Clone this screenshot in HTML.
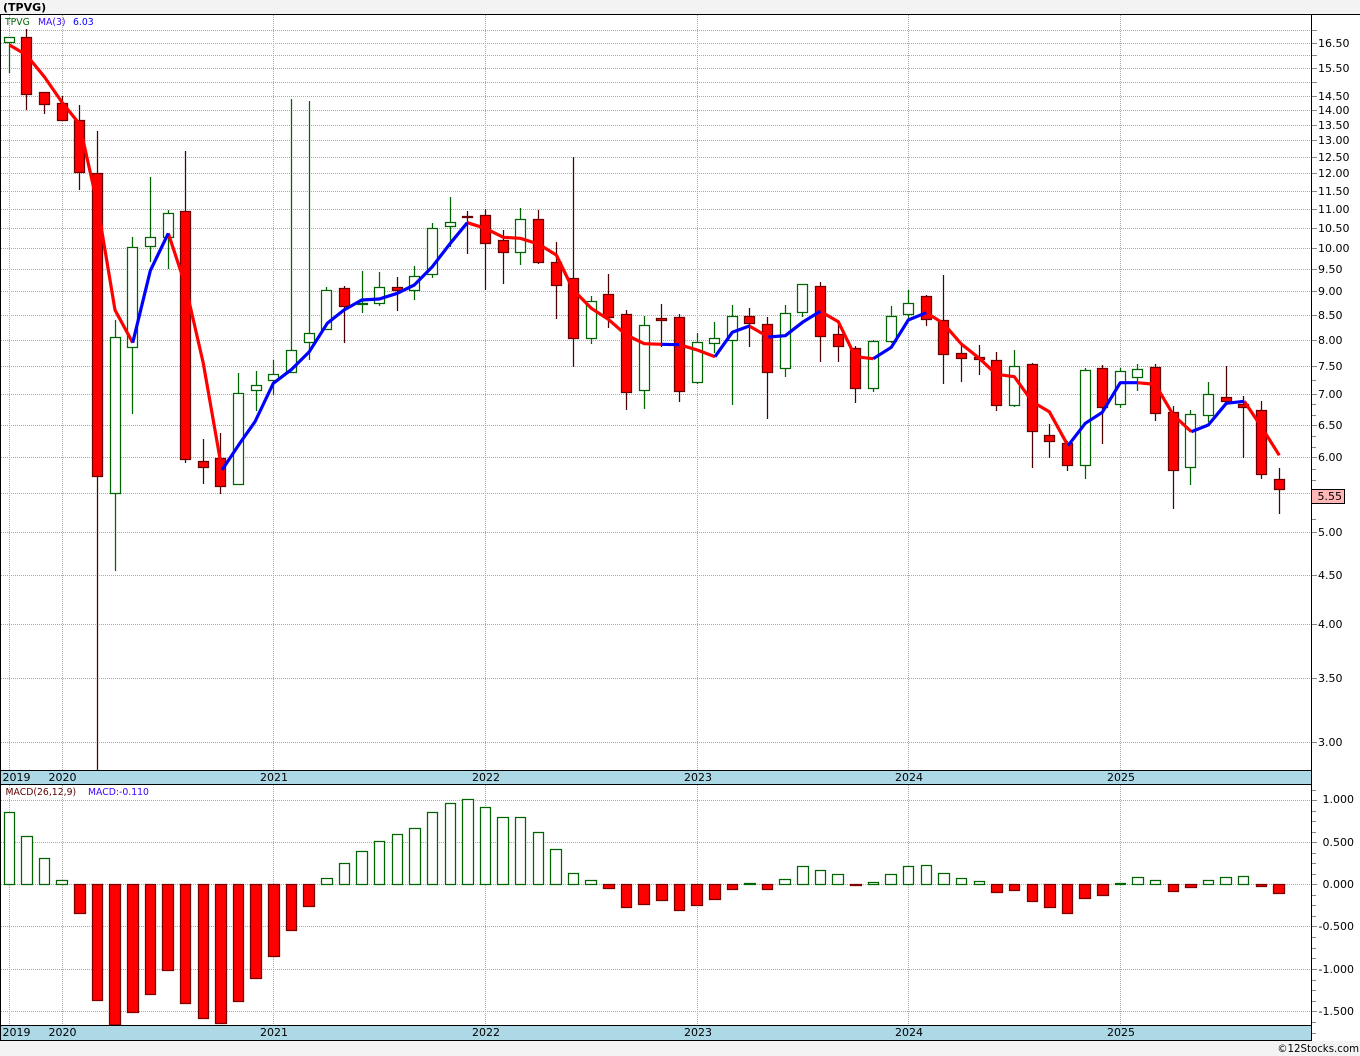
<!DOCTYPE html>
<html><head><meta charset="utf-8"><title>TPVG</title>
<style>
html,body{margin:0;padding:0;background:#f3f3f3;}
svg{display:block;}
text{font-family:"DejaVu Sans",sans-serif;font-size:11px;fill:#000;}
.s{font-size:9.3px;}
</style></head><body>
<svg width="1360" height="1056" viewBox="0 0 1360 1056" xmlns="http://www.w3.org/2000/svg">
<rect width="1360" height="1056" fill="#f3f3f3"/>
<rect x="0" y="14" width="1360" height="1027" fill="#fff"/>
<g shape-rendering="crispEdges">
<path fill="none" stroke="#aaa" stroke-dasharray="1 1" d="M1 30.5H1311M1 43.5H1311M1 55.5H1311M1 68.5H1311M1 82.5H1311M1 96.5H1311M1 110.5H1311M1 125.5H1311M1 140.5H1311M1 157.5H1311M1 173.5H1311M1 191.5H1311M1 209.5H1311M1 228.5H1311M1 248.5H1311M1 269.5H1311M1 291.5H1311M1 315.5H1311M1 340.5H1311M1 366.5H1311M1 394.5H1311M1 425.5H1311M1 457.5H1311M1 493.5H1311M1 532.5H1311M1 575.5H1311M1 624.5H1311M1 678.5H1311M1 742.5H1311M9.5 15V770M62.5 15V770M273.5 15V770M485.5 15V770M697.5 15V770M908.5 15V770M1120.5 15V770M1 800.5H1311M1 842.5H1311M1 884.5H1311M1 926.5H1311M1 969.5H1311M1 1011.5H1311M9.5 785V1025M62.5 785V1025M273.5 785V1025M485.5 785V1025M697.5 785V1025M908.5 785V1025M1120.5 785V1025"/>
<path fill="none" stroke="#888" d="M1312 30.5h5M1312 43.5h5M1312 55.5h5M1312 68.5h5M1312 82.5h5M1312 96.5h5M1312 110.5h5M1312 125.5h5M1312 140.5h5M1312 157.5h5M1312 173.5h5M1312 191.5h5M1312 209.5h5M1312 228.5h5M1312 248.5h5M1312 269.5h5M1312 291.5h5M1312 315.5h5M1312 340.5h5M1312 366.5h5M1312 394.5h5M1312 425.5h5M1312 457.5h5M1312 532.5h5M1312 575.5h5M1312 624.5h5M1312 678.5h5M1312 742.5h5M1312 380.5h4M1312 404.5h4M1312 415.5h4M1312 436.5h4M1312 447.5h4M1312 469.5h4M1312 480.5h4M1312 519.5h4M1312 800.5h5M1312 842.5h5M1312 884.5h5M1312 926.5h5M1312 969.5h5M1312 1011.5h5M1312 980.5h4M1312 990.5h4M1312 1001.5h4M1312 1022.5h4M1312 1033.5h4M1312 958.5h4M1312 948.5h4M1312 937.5h4M1312 916.5h4M1312 905.5h4M1312 895.5h4M1312 874.5h4M1312 863.5h4M1312 853.5h4M1312 832.5h4M1312 821.5h4M1312 811.5h4M1312 790.5h4"/>
</g>
<g stroke-width="1.25">
<path fill="none" stroke="#006400" d="M9.5 37V73M115.5 320V571M132.5 237V414M150.5 177V262M168.5 210V269M238.5 373V485M256.5 371V411M273.5 360V395M291.5 99V372M309.5 101V360M326.5 287V330M362.5 271V313M379.5 272V306M414.5 266V300M432.5 223V278M450.5 197V247M520.5 208V265M591.5 296V344M644.5 316V409M697.5 333V384M714.5 322V353M732.5 305V405M785.5 305V377M802.5 284V317M873.5 340V392M891.5 306V343M908.5 290V320M1014.5 350V407M1085.5 368V479M1120.5 368V408M1137.5 364V391M1190.5 410V485M1208.5 382V422"/>
<path fill="none" stroke="#4d0000" d="M26.5 29V110M44.5 92V114M62.5 96V120M79.5 105V190M97.5 131V771M185.5 151V463M203.5 439V484M220.5 433V494M344.5 286V343M397.5 277V311M467.5 211V254M485.5 209V290M503.5 230V284M538.5 210V264M556.5 242V319M573.5 157V367M608.5 274V328M626.5 310V410M661.5 304V347M679.5 314V402M749.5 308V347M767.5 317V419M820.5 282V362M838.5 323V362M855.5 346V403M926.5 295V326M943.5 275V384M961.5 344V382M979.5 345V375M996.5 352V411M1032.5 363V468M1049.5 424V458M1067.5 441V471M1102.5 365V444M1155.5 364V421M1173.5 406V509M1226.5 366V402M1243.5 396V458M1261.5 401V479M1279.5 468V514"/>
<path fill="#fff" stroke="#006400" d="M4.5 37.5h10v5h-10zM110.5 337.5h10v156h-10zM127.5 247.5h10v100h-10zM145.5 237.5h10v9h-10zM163.5 213.5h10v24h-10zM233.5 393.5h10v91h-10zM251.5 385.5h10v5h-10zM268.5 374.5h10v6h-10zM286.5 350.5h10v22h-10zM304.5 333.5h10v9h-10zM321.5 290.5h10v39h-10zM357.5 303.5h10v1h-10zM374.5 287.5h10v16h-10zM409.5 276.5h10v14h-10zM427.5 228.5h10v46h-10zM445.5 222.5h10v4h-10zM515.5 219.5h10v33h-10zM586.5 301.5h10v37h-10zM639.5 325.5h10v65h-10zM692.5 342.5h10v40h-10zM709.5 338.5h10v5h-10zM727.5 316.5h10v24h-10zM780.5 313.5h10v55h-10zM797.5 284.5h10v28h-10zM868.5 341.5h10v47h-10zM886.5 316.5h10v25h-10zM903.5 303.5h10v11h-10zM1009.5 366.5h10v39h-10zM1080.5 370.5h10v95h-10zM1115.5 371.5h10v33h-10zM1132.5 369.5h10v8h-10zM1185.5 414.5h10v53h-10zM1203.5 394.5h10v21h-10z"/>
<path fill="#f00" stroke="#6b0000" d="M21.5 37.5h10v57h-10zM39.5 92.5h10v12h-10zM57.5 103.5h10v17h-10zM74.5 120.5h10v52h-10zM92.5 173.5h10v303h-10zM180.5 211.5h10v248h-10zM198.5 461.5h10v6h-10zM215.5 458.5h10v28h-10zM339.5 288.5h10v18h-10zM392.5 287.5h10v3h-10zM462.5 216.5h10v1h-10zM480.5 215.5h10v28h-10zM498.5 240.5h10v12h-10zM533.5 219.5h10v43h-10zM551.5 262.5h10v23h-10zM568.5 278.5h10v60h-10zM603.5 294.5h10v23h-10zM621.5 314.5h10v78h-10zM656.5 318.5h10v2h-10zM674.5 317.5h10v74h-10zM744.5 316.5h10v7h-10zM762.5 324.5h10v48h-10zM815.5 286.5h10v50h-10zM833.5 334.5h10v12h-10zM850.5 348.5h10v40h-10zM921.5 296.5h10v23h-10zM938.5 320.5h10v34h-10zM956.5 353.5h10v5h-10zM974.5 357.5h10v2h-10zM991.5 360.5h10v45h-10zM1027.5 364.5h10v67h-10zM1044.5 435.5h10v6h-10zM1062.5 443.5h10v22h-10zM1097.5 368.5h10v39h-10zM1150.5 367.5h10v46h-10zM1168.5 412.5h10v58h-10zM1221.5 397.5h10v4h-10zM1238.5 404.5h10v3h-10zM1256.5 410.5h10v64h-10zM1274.5 479.5h10v10h-10z"/>
<path fill="#fff" stroke="#006400" d="M4.5 812.5h10V884.5H4.5zM21.5 836.5h11V884.5H21.5zM39.5 858.5h10V884.5H39.5zM56.5 880.5h11V884.5H56.5zM321.5 878.5h11V884.5H321.5zM339.5 863.5h10V884.5H339.5zM356.5 851.5h11V884.5H356.5zM374.5 841.5h10V884.5H374.5zM392.5 834.5h10V884.5H392.5zM409.5 828.5h11V884.5H409.5zM427.5 812.5h10V884.5H427.5zM445.5 803.5h10V884.5H445.5zM462.5 799.5h11V884.5H462.5zM480.5 807.5h10V884.5H480.5zM497.5 817.5h11V884.5H497.5zM515.5 817.5h10V884.5H515.5zM533.5 832.5h10V884.5H533.5zM550.5 849.5h11V884.5H550.5zM568.5 873.5h10V884.5H568.5zM585.5 880.5h11V884.5H585.5zM744.5 883.5h11V884.5H744.5zM779.5 879.5h11V884.5H779.5zM797.5 866.5h11V884.5H797.5zM815.5 870.5h10V884.5H815.5zM832.5 874.5h11V884.5H832.5zM868.5 882.5h10V884.5H868.5zM885.5 874.5h11V884.5H885.5zM903.5 866.5h10V884.5H903.5zM921.5 865.5h10V884.5H921.5zM938.5 873.5h11V884.5H938.5zM956.5 878.5h10V884.5H956.5zM974.5 881.5h10V884.5H974.5zM1115.5 883.5h10V884.5H1115.5zM1132.5 877.5h11V884.5H1132.5zM1150.5 880.5h10V884.5H1150.5zM1203.5 880.5h10V884.5H1203.5zM1220.5 877.5h11V884.5H1220.5zM1238.5 876.5h10V884.5H1238.5z"/>
<path fill="#f00" stroke="#7a0000" d="M74.5 884.5h11V913.5H74.5zM92.5 884.5h10V1000.5H92.5zM109.5 884.5h11V1025H109.5zM127.5 884.5h11V1012.5H127.5zM145.5 884.5h10V994.5H145.5zM162.5 884.5h11V970.5H162.5zM180.5 884.5h10V1003.5H180.5zM198.5 884.5h10V1018.5H198.5zM215.5 884.5h11V1023.5H215.5zM233.5 884.5h10V1001.5H233.5zM250.5 884.5h11V978.5H250.5zM268.5 884.5h11V956.5H268.5zM286.5 884.5h10V930.5H286.5zM303.5 884.5h11V906.5H303.5zM603.5 884.5h11V888.5H603.5zM621.5 884.5h10V907.5H621.5zM638.5 884.5h11V904.5H638.5zM656.5 884.5h11V900.5H656.5zM674.5 884.5h10V910.5H674.5zM691.5 884.5h11V905.5H691.5zM709.5 884.5h11V899.5H709.5zM727.5 884.5h10V889.5H727.5zM762.5 884.5h10V889.5H762.5zM850.5 884.5h11V885.5H850.5zM991.5 884.5h11V892.5H991.5zM1009.5 884.5h10V890.5H1009.5zM1027.5 884.5h10V901.5H1027.5zM1044.5 884.5h11V907.5H1044.5zM1062.5 884.5h10V913.5H1062.5zM1079.5 884.5h11V898.5H1079.5zM1097.5 884.5h11V895.5H1097.5zM1168.5 884.5h10V891.5H1168.5zM1185.5 884.5h11V887.5H1185.5zM1256.5 884.5h10V886.5H1256.5zM1273.5 884.5h11V893.5H1273.5z"/>
</g>
<g fill="none" stroke-width="3.2" stroke-linejoin="round">
<path stroke="#f00" d="M9.5 45L26.5 55L44.5 77L62.5 103L79.5 124L97.5 205L115 310L132.7 342.7M168.3 233.3L185.3 285L203.3 363.3L222 470M467.3 222.7L485.3 228.3L503.3 237.3L520.3 238.3L538.3 244L556.3 255L573.3 290L591.3 308.3L608.3 319.3L626.3 335L644.3 343.7L661.7 344.3M679.3 344.7L697.3 350L715 356.7M749.3 326L768.3 337M820.3 311.3L838.3 321.7L855.3 356.7L873.3 358.7M926.3 312.7L943.3 323.3L961.3 344L979.3 358.3L996.3 374.3L1014.3 376.7L1032.3 401.7L1049.3 411.7L1068 445.7M1137.3 382.7L1155.3 384.3L1173.3 415L1191.3 431.7M1244.3 401.3L1261.3 426.7L1279.3 455.3"/>
<path stroke="#00f" d="M132.7 342.7L150.3 270.7L168.3 233.3M222 470L240 443L255 421.7L273.3 383.3L291.7 369.3L309.3 351.7L327.3 323.3L344 310L361.7 300L379.3 299L397.3 293.3L414.3 285L432.3 266.7L450.3 243.3L467.3 222.7M661.7 344.3L679.3 344.7M715 356.7L732.3 332.3L749.3 326M768.3 337L785.3 335.7L803.3 321.7L820.3 311.3M873.3 358.7L891.3 347.3L908.3 320L926.3 312.7M1068 445.7L1085.3 423.3L1102.3 412.3L1120.3 382.7L1137.3 382.7M1191.3 431.7L1208.3 425L1226.3 403.3L1244.3 401.3"/>
</g>
<g shape-rendering="crispEdges">
<rect x="1" y="771" width="1310" height="13" fill="#add8e6"/>
<rect x="1" y="1026" width="1310" height="14" fill="#add8e6"/>
<path fill="none" stroke="#000" d="M0 14.5H1360M0.5 14V1041M1311.5 14V1041M0 770.5H1311M0 784.5H1311M0 1025.5H1311M0 1040.5H1312"/>
<rect x="1311.5" y="489.5" width="33" height="14" fill="#ffb6b6" stroke="#000"/>
</g>
<text x="3" y="11" style="font-weight:bold">(TPVG)</text>
<text class="s" x="5" y="25" style="fill:#006400">TPVG</text>
<text class="s" x="38" y="25" style="fill:#3b00ff">MA(3)</text>
<text class="s" x="73" y="25" style="fill:#0000ff">6.03</text>
<text class="s" x="5.5" y="795" style="fill:#600000">MACD(26,12,9)</text>
<text class="s" x="88" y="795" style="fill:#3b00ff">MACD:-0.110</text>
<text x="2.5" y="781">2019</text><text x="48.5" y="781">2020</text><text x="260" y="781">2021</text><text x="472" y="781">2022</text><text x="684" y="781">2023</text><text x="895" y="781">2024</text><text x="1107" y="781">2025</text>
<text x="2.5" y="1036">2019</text><text x="48.5" y="1036">2020</text><text x="260" y="1036">2021</text><text x="472" y="1036">2022</text><text x="684" y="1036">2023</text><text x="895" y="1036">2024</text><text x="1107" y="1036">2025</text>
<text x="1318" y="47">16.50</text><text x="1318" y="72">15.50</text><text x="1318" y="100">14.50</text><text x="1318" y="114">14.00</text><text x="1318" y="129">13.50</text><text x="1318" y="144">13.00</text><text x="1318" y="161">12.50</text><text x="1318" y="177">12.00</text><text x="1318" y="195">11.50</text><text x="1318" y="213">11.00</text><text x="1318" y="232">10.50</text><text x="1318" y="252">10.00</text>
<text x="1318" y="273">9.50</text><text x="1318" y="295">9.00</text><text x="1318" y="319">8.50</text><text x="1318" y="344">8.00</text><text x="1318" y="370">7.50</text><text x="1318" y="398">7.00</text><text x="1318" y="429">6.50</text><text x="1318" y="461">6.00</text><text x="1317.5" y="500">5.55</text><text x="1318" y="536">5.00</text><text x="1318" y="579">4.50</text><text x="1318" y="628">4.00</text><text x="1318" y="682">3.50</text><text x="1318" y="746">3.00</text>
<text x="1354" y="803" text-anchor="end">1.000</text><text x="1354" y="846" text-anchor="end">0.500</text><text x="1354" y="888" text-anchor="end">0.000</text><text x="1354" y="930" text-anchor="end">-0.500</text><text x="1354" y="973" text-anchor="end">-1.000</text><text x="1354" y="1015" text-anchor="end">-1.500</text>
<text x="1359" y="1052" text-anchor="end" style="font-size:10.2px">©12Stocks.com</text>
</svg>
</body></html>
